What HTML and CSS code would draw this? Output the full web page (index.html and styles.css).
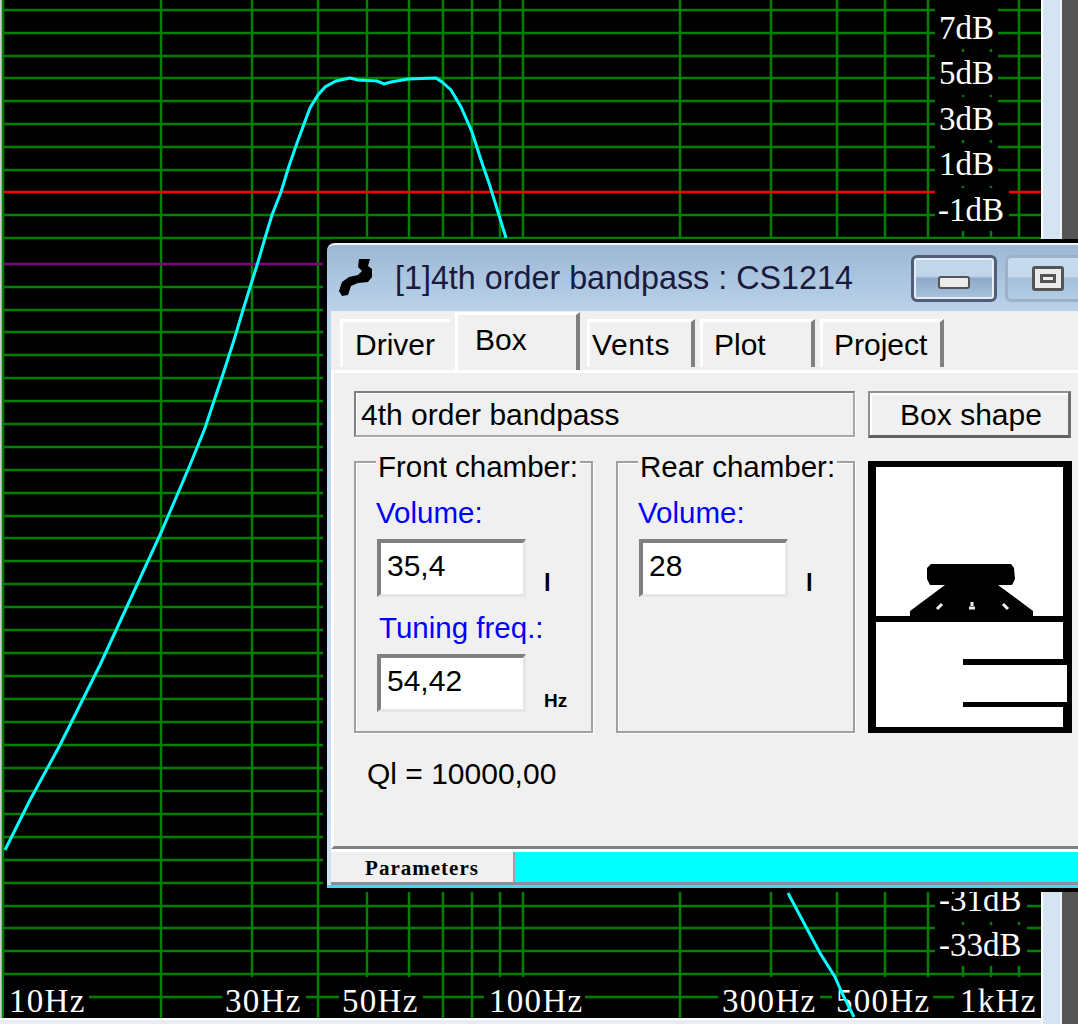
FILE: index.html
```html
<!DOCTYPE html>
<html lang="en">
  <head>
    <meta charset="UTF-8" />
    <title>4th order bandpass : CS1214</title>
    <link rel="stylesheet" href="styles.css">
  </head>
  <body>
    <div class="desktop">
      <div class="plot-column">
        <!-- Response plot -->
        <svg class="plot" width="1041" height="1018" viewBox="0 0 1041 1018">
          <rect class="plot-edge" x="0" y="0" width="2" height="1018" />
          <path class="grid" d="M3 0V1018 M161 0V1018 M252 0V977 M318 0V1018 M367 0V977 M409 0V977 M443 0V1018 M472 0V1018 M500 0V977 M523 0V977 M680 0V1018 M771 0V977 M837 0V977 M885 0V977 M928 0V977 M963 0V977 M991 0V977 M1019 0V977" />
          <path class="grid" d="M4 10H1041 M4 33H1041 M4 56H1041 M4 78H1041 M4 101H1041 M4 124H1041 M4 147H1041 M4 170H1041 M4 215H1041 M4 238H1041 M4 287H1041 M4 310H1041 M4 332H1041 M4 355H1041 M4 378H1041 M4 401H1041 M4 424H1041 M4 447H1041 M4 470H1041 M4 493H1041 M4 516H1041 M4 538H1041 M4 561H1041 M4 584H1041 M4 607H1041 M4 630H1041 M4 653H1041 M4 676H1041 M4 699H1041 M4 722H1041 M4 745H1041 M4 768H1041 M4 791H1041 M4 814H1041 M4 837H1041 M4 860H1041 M4 883H1041 M4 906H1041 M4 928H1041 M4 951H1041 M4 974H1041 M4 997H1041" />
          <path class="line-zero" d="M4 192H1041" />
          <path class="line-limit" d="M4 264H1041" />

          <!-- label backings, they cut the grid -->
          <rect class="label-box" x="935" y="0" width="63" height="49" />
          <rect class="label-box" x="935" y="52" width="63" height="43" />
          <rect class="label-box" x="935" y="97" width="63" height="43" />
          <rect class="label-box" x="935" y="143" width="63" height="43" />
          <rect class="label-box" x="935" y="188" width="74" height="43" />
          <rect class="label-box" x="935" y="878" width="92" height="44" />
          <rect class="label-box" x="935" y="925" width="92" height="41" />
          <rect class="label-box" x="4" y="977" width="85" height="41" />
          <rect class="label-box" x="222" y="977" width="84" height="41" />
          <rect class="label-box" x="339" y="977" width="84" height="41" />
          <rect class="label-box" x="484" y="977" width="101" height="41" />
          <rect class="label-box" x="718" y="977" width="102" height="41" />
          <rect class="label-box" x="832" y="977" width="101" height="41" />
          <rect class="label-box" x="954" y="977" width="87" height="41" />

          <text class="axis-label" x="939" y="39">7dB</text>
          <text class="axis-label" x="939" y="84">5dB</text>
          <text class="axis-label" x="939" y="130">3dB</text>
          <text class="axis-label" x="939" y="175">1dB</text>
          <text class="axis-label" x="938" y="221">-1dB</text>
          <text class="axis-label" x="939" y="911">-31dB</text>
          <text class="axis-label" x="939" y="956">-33dB</text>
          <text class="axis-label freq-label" x="9" y="1012">10Hz</text>
          <text class="axis-label freq-label" x="225" y="1012">30Hz</text>
          <text class="axis-label freq-label" x="342" y="1012">50Hz</text>
          <text class="axis-label freq-label" x="489" y="1012">100Hz</text>
          <text class="axis-label freq-label" x="722" y="1012">300Hz</text>
          <text class="axis-label freq-label" x="836" y="1012">500Hz</text>
          <text class="axis-label freq-label" x="960" y="1012">1kHz</text>

          <polyline class="curve" points="5,850 15,830 30,800 60,745 100,665 130,600 160,535 190,465 205,428 215,398 225,368 234,340 243,310 252,281 258,262 265,238 272,215 281,192 289,166 297,143 304,124 310,108 318,95 325,87 336,81 350,78 358,80 377,81 384,84 391,82 408,79 436,78 442,82 451,90 461,107 472,132 482,163 489,183 498,212 506,238" />
          <polyline class="curve" points="788,893 806,927 820,953 835,977 842,993 854,1017" />
        </svg>
        <div class="plot-foot"></div>
      </div>
      <div class="frame-edge"></div>
      <div class="backdrop"></div>

      <!-- Box window -->
      <div class="window">
        <div class="titlebar">
          <svg class="app-icon" width="34" height="38" viewBox="339 260 34 38">
            <polygon points="359,260 370,260 368,267 372,270 372,278 368,283 358,284 351,287 348,296 342,297 339,292 342,283 349,278 358,276 362,272 358,268" />
          </svg>
          <span class="title-text">[1]4th order bandpass : CS1214</span>
          <div class="win-button win-min"><span class="min-glyph"></span></div>
          <div class="win-button win-max"><span class="max-glyph"></span></div>
        </div>

        <div class="content">
          <div class="tabs">
            <div class="tab tab-driver">Driver</div>
            <div class="tab tab-box">Box</div>
            <div class="tab tab-vents">Vents</div>
            <div class="tab tab-plot">Plot</div>
            <div class="tab tab-project">Project</div>
          </div>

          <div class="panel">
            <div class="name-row">
              <div class="name-field">4th order bandpass</div>
              <div class="shape-button">Box shape</div>
            </div>

            <div class="chambers">
              <div class="group">
                <div class="group-title">Front chamber:</div>
                <div class="field-label">Volume:</div>
                <div class="field-row">
                  <div class="field">35,4</div>
                  <span class="unit unit-l">l</span>
                </div>
                <div class="field-label label-tuning">Tuning freq.:</div>
                <div class="field-row">
                  <div class="field">54,42</div>
                  <span class="unit unit-hz">Hz</span>
                </div>
              </div>

              <div class="group">
                <div class="group-title">Rear chamber:</div>
                <div class="field-label">Volume:</div>
                <div class="field-row">
                  <div class="field">28</div>
                  <span class="unit unit-l">l</span>
                </div>
              </div>

              <!-- Box drawing -->
              <svg class="box-preview" width="204" height="272" viewBox="0 0 204 272">
                <rect class="ink" x="0" y="0" width="204" height="272" />
                <rect class="paper" x="8" y="6" width="187" height="260" />
                <rect class="paper" x="190" y="204" width="9" height="37" />
                <rect class="ink" x="8" y="155" width="187" height="6" />
                <rect class="ink" x="95" y="198" width="104" height="6" />
                <rect class="ink" x="95" y="241" width="104" height="5" />
                <polygon class="ink" points="63,103 143,103 146,107 147,118 144,124 130,124 165,150 165,156 42,156 42,150 77,124 62,124 59,118 59,107" />
                <path class="speaker-hole" d="M69 148L74 143 M135 143L140 148 M104 141V145 M101 147H107" />
              </svg>
            </div>

            <div class="ql-text">Ql = 10000,00</div>
          </div>

          <div class="statusbar">
            <div class="status-label">Parameters</div>
            <div class="status-fill"></div>
          </div>
        </div>
      </div>
    </div>
  </body>
</html>
```

FILE: styles.css
```css
body {
  margin: 0;
  background-color: #f0f0f0;
  font-family: "Liberation Sans", Arial, sans-serif;
  color: #000;
}

.desktop {
  position: relative;
  display: flex;
  width: 1078px;
  height: 1024px;
  overflow: hidden;
}

/* Plot area */
.plot-column {
  width: 1041px;
}

.plot {
  display: block;
  background-color: #000;
}

.plot-edge {
  fill: #c8d0c8;
}

.grid {
  fill: none;
  stroke: #008000;
  stroke-width: 2.5;
}

.line-zero {
  stroke: #ff0000;
  stroke-width: 2.5;
}

.line-limit {
  stroke: #800080;
  stroke-width: 2.5;
}

.label-box {
  fill: #000;
}

.axis-label {
  fill: #fff;
  font-family: "Liberation Serif", "Times New Roman", serif;
  font-size: 33px;
}

.freq-label {
  letter-spacing: 1.3px;
}

.curve {
  fill: none;
  stroke: #00ffff;
  stroke-width: 3;
}

.plot-foot {
  height: 6px;
  background-color: #e9edf2;
  border-top: 2px solid #fff;
  box-sizing: border-box;
}

.frame-edge {
  width: 17px;
  background-color: #d6e3f1;
  border-left: 2px solid #fff;
  border-right: 2px solid #eef2f6;
}

.backdrop {
  flex: 1;
  background-color: #555;
}

/* Floating window */
.window {
  position: absolute;
  left: 327px;
  top: 243px;
  width: 770px;
  height: 645px;
  box-sizing: border-box;
  display: flex;
  flex-direction: column;
  padding-left: 4px;
  border-top: 2px solid #f2f6fa;
  border-bottom: 3px solid #4fd3ee;
  border-radius: 8px 8px 0 0;
  background: linear-gradient(#9db8d5 0, #bad2ea 66px, #cfe3f5 100%);
  box-shadow: 0 0 0 4px #000;
}

.titlebar {
  display: flex;
  align-items: center;
  height: 66px;
  flex-shrink: 0;
  padding-left: 8px;
  padding-right: 6px;
}

.app-icon {
  fill: #000;
}

.title-text {
  margin-left: 22px;
  font-size: 32.3px;
  color: #1a1a3c;
}

.win-button {
  display: flex;
  align-items: center;
  justify-content: center;
  box-sizing: border-box;
  height: 47px;
  border-radius: 6px;
}

.win-min {
  width: 86px;
  margin-left: auto;
  border: 3px solid #4d5e76;
  box-shadow: inset 0 0 0 2px #e4eef8;
  background: linear-gradient(#c2d6ea 0, #c2d6ea 44%, #8eaac8 50%, #a9c4df 100%);
}

.win-max {
  width: 86px;
  margin-left: 8px;
  border: 3px solid #9db1c8;
  background: linear-gradient(#c6daee 0, #c6daee 44%, #a6c0da 50%, #b4cde6 100%);
}

.min-glyph {
  width: 32px;
  height: 13px;
  margin-top: 8px;
  box-sizing: border-box;
  border: 2px solid #555;
  border-radius: 3px;
  background-color: #ececec;
}

.max-glyph {
  width: 32px;
  height: 25px;
  box-sizing: border-box;
  border: 3px solid #555;
  border-radius: 3px;
  background-color: #ececec;
  box-shadow: inset 0 0 0 5px #ececec, inset 0 0 0 8px #555;
}

.content {
  flex: 1;
  display: flex;
  flex-direction: column;
  min-height: 0;
  background-color: #f0f0f0;
}

/* Tabs */
.tabs {
  display: flex;
  align-items: flex-end;
  height: 59px;
  flex-shrink: 0;
  padding-left: 9px;
}

.tab {
  box-sizing: border-box;
  height: 48px;
  margin-bottom: 3px;
  padding-top: 4px;
  font-size: 30px;
  line-height: 38px;
  text-align: left;
  border-top: 3px solid #fff;
  border-left: 3px solid #fff;
  border-right: 4px solid #808080;
}

.tab-driver {
  width: 110px;
  margin-right: 5px;
  padding-left: 12px;
  border-right: 0;
}

.tab-box {
  position: relative;
  top: 3px;
  width: 125px;
  height: 58px;
  padding-top: 2px;
  padding-left: 17px;
  margin-right: 7px;
  z-index: 1;
  line-height: 46px;
}

.tab-vents {
  width: 108px;
  margin-right: 5px;
  padding-left: 2px;
  letter-spacing: 0.6px;
}

.tab-plot {
  width: 115px;
  margin-right: 5px;
  padding-left: 11px;
}

.tab-project {
  width: 124px;
  padding-left: 11px;
}

/* Page under the tabs */
.panel {
  flex: 1;
  min-height: 0;
  padding: 18px 0 0 20px;
  border-top: 3px solid #fff;
  border-left: 3px solid #fff;
  border-bottom: 3px solid #808080;
  box-shadow: 0 3px 0 #fff;
}

.name-row {
  display: flex;
  align-items: flex-start;
  gap: 13px;
  height: 49px;
  margin-bottom: 21px;
}

.name-field {
  box-sizing: border-box;
  width: 501px;
  height: 46px;
  padding-left: 5px;
  font-size: 30px;
  line-height: 44px;
  border: 2px solid #808080;
  border-color: #808080 #a8a8a8 #a8a8a8 #808080;
  box-shadow: inset 1px 1px 0 #fff, 1px 1px 0 #fff;
}

.shape-button {
  box-sizing: border-box;
  width: 203px;
  height: 47px;
  padding-left: 4px;
  font-size: 30px;
  line-height: 44px;
  text-align: center;
  border-style: solid;
  border-width: 2px 3px 3px 2px;
  border-color: #909090 #707070 #606060 #909090;
  box-shadow: inset 2px 2px 0 #fff;
}

.chambers {
  display: flex;
  align-items: flex-start;
  gap: 23px;
}

.group {
  position: relative;
  box-sizing: border-box;
  width: 239px;
  height: 272px;
  padding: 33px 0 0 20px;
  border: 2px solid #a0a0a0;
  box-shadow: inset 1px 1px 0 #fff, 1px 1px 0 #fff;
}

.group-title {
  position: absolute;
  top: -13px;
  left: 20px;
  padding: 0 2px;
  font-size: 29.5px;
  line-height: 34px;
  background-color: #f0f0f0;
}

.field-label {
  font-size: 29.5px;
  line-height: 34px;
  color: #0000ff;
}

.label-tuning {
  margin-top: 14px;
  margin-left: 3px;
}

.field-row {
  display: flex;
  align-items: flex-end;
  margin-top: 9px;
  margin-left: 1px;
}

.field {
  box-sizing: border-box;
  width: 149px;
  height: 58px;
  padding-left: 6px;
  font-size: 30px;
  line-height: 46px;
  background-color: #fff;
  border-style: solid;
  border-width: 4px 3px 3px 4px;
  border-color: #808080 #e6e6e6 #e6e6e6 #808080;
}

.unit {
  font-weight: bold;
  line-height: 1;
}

.unit-l {
  margin-left: 18px;
  padding-bottom: 2px;
  font-size: 24px;
}

.unit-hz {
  margin-left: 18px;
  padding-bottom: 2px;
  font-size: 19px;
}

.box-preview {
  margin-left: -10px;
  flex-shrink: 0;
}

.ink {
  fill: #000;
}

.paper {
  fill: #fff;
}

.speaker-hole {
  fill: none;
  stroke: #eee;
  stroke-width: 3;
}

.ql-text {
  margin-top: 23px;
  margin-left: 13px;
  font-size: 30px;
  line-height: 36px;
}

/* Status strip */
.statusbar {
  display: flex;
  height: 33px;
  flex-shrink: 0;
  margin-top: 3px;
  border-bottom: 3px solid #8a9096;
  box-sizing: border-box;
}

.status-label {
  width: 184px;
  font-family: "Liberation Serif", "Times New Roman", serif;
  font-weight: bold;
  font-size: 21px;
  letter-spacing: 1px;
  line-height: 32px;
  text-align: center;
  box-sizing: border-box;
  border-right: 2px solid #a0a0a0;
}

.status-fill {
  flex: 1;
  background-color: #00ffff;
}
```
